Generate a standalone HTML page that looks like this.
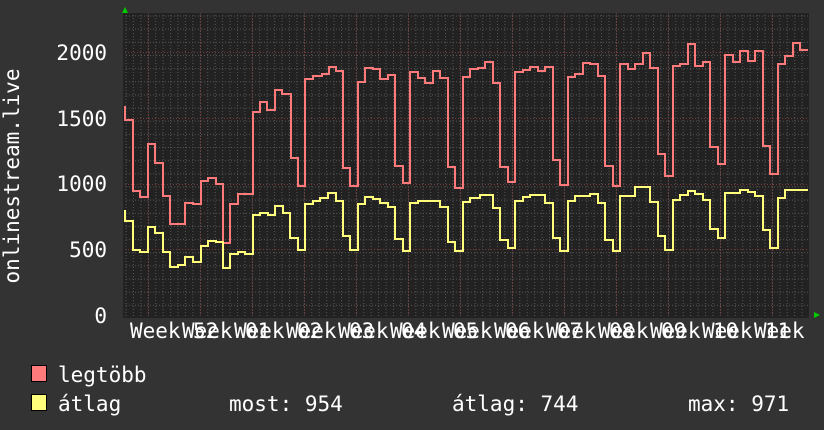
<!DOCTYPE html>
<html><head><meta charset="utf-8"><style>
html,body{margin:0;padding:0;background:#333;}
svg{display:block;font-family:"DejaVu Sans Mono","Liberation Mono",monospace;}
</style></head><body>
<svg width="824" height="430" viewBox="0 0 824 430" xmlns="http://www.w3.org/2000/svg">
<defs>
<pattern id="vg" x="0" y="0" width="7.43" height="430" patternUnits="userSpaceOnUse" patternTransform="translate(125.5 0)">
<line x1="0.5" y1="0" x2="0.5" y2="430" stroke="#555" stroke-width="1" stroke-dasharray="1,2"/>
</pattern>
<pattern id="hg" x="0" y="0" width="824" height="13.15" patternUnits="userSpaceOnUse" patternTransform="translate(0 2.4)">
<line x1="0" y1="0.5" x2="824" y2="0.5" stroke="#555" stroke-width="1" stroke-dasharray="1,2"/>
</pattern>
</defs>
<rect width="824" height="430" fill="#333"/>
<rect x="123" y="13" width="686" height="305" fill="#222"/>
<rect x="125" y="13" width="684" height="303" fill="url(#vg)"/>
<rect x="125" y="13" width="684" height="303" fill="url(#hg)"/>
<g stroke="#7a3a3a" stroke-width="1" stroke-dasharray="1,2">
<line x1="125" y1="52.5" x2="809" y2="52.5"/><line x1="125" y1="118.5" x2="809" y2="118.5"/>
<line x1="125" y1="184.5" x2="809" y2="184.5"/><line x1="125" y1="249.5" x2="809" y2="249.5"/>
<line x1="148.5" y1="13" x2="148.5" y2="316"/><line x1="200.5" y1="13" x2="200.5" y2="316"/>
<line x1="252.5" y1="13" x2="252.5" y2="316"/><line x1="304.5" y1="13" x2="304.5" y2="316"/>
<line x1="356.5" y1="13" x2="356.5" y2="316"/><line x1="408.5" y1="13" x2="408.5" y2="316"/>
<line x1="460.5" y1="13" x2="460.5" y2="316"/><line x1="512.5" y1="13" x2="512.5" y2="316"/>
<line x1="564.5" y1="13" x2="564.5" y2="316"/><line x1="616.5" y1="13" x2="616.5" y2="316"/>
<line x1="668.5" y1="13" x2="668.5" y2="316"/><line x1="720.5" y1="13" x2="720.5" y2="316"/>
<line x1="772.5" y1="13" x2="772.5" y2="316"/>
</g>
<polygon points="122,13 128,13 125,7" fill="#0c0"/>
<polygon points="814,312 814,318 820,315" fill="#0c0"/>
<path fill="none" stroke="#ff7b7b" stroke-width="2" d="M125,106 V120 H133 V191 H140 V197 H148 V144 H155 V163 H163 V196 H170 V224 H185 V203 H193 V204 H201 V181 H208 V178 H216 V184 H223 V243 H230 V204 H238 V194 H253 V112 H260 V102 H267 V110 H275 V90 H282 V94 H291 V158 H298 V186 H305 V79 H313 V76 H322 V74 H329 V67 H336 V71 H343 V168 H350 V186 H358 V82 H365 V68 H373 V69 H380 V79 H388 V75 H395 V166 H403 V183 H410 V72 H418 V78 H425 V83 H433 V71 H440 V78 H448 V167 H455 V188 H463 V77 H470 V69 H478 V68 H485 V62 H493 V83 H500 V167 H508 V182 H515 V72 H523 V70 H530 V67 H538 V71 H545 V67 H553 V160 H560 V185 H568 V77 H575 V74 H583 V63 H590 V64 H598 V76 H605 V166 H613 V186 H620 V64 H628 V69 H635 V64 H643 V53 H650 V68 H658 V154 H665 V176 H673 V66 H680 V64 H688 V44 H695 V66 H703 V62 H710 V147 H718 V164 H725 V55 H733 V62 H740 V51 H748 V61 H755 V51 H763 V146 H770 V174 H778 V64 H785 V56 H793 V43 H800 V50 H808"/>
<path fill="none" stroke="#ffff7b" stroke-width="2" d="M125,210 V221 H133 V250 H140 V252 H148 V227 H155 V233 H163 V252 H170 V267 H178 V265 H185 V257 H193 V262 H201 V246 H208 V241 H216 V242 H223 V268 H230 V254 H238 V252 H245 V254 H253 V215 H260 V213 H268 V215 H275 V206 H283 V213 H290 V238 H298 V250 H305 V204 H313 V201 H320 V198 H328 V193 H336 V201 H343 V236 H350 V250 H358 V204 H365 V197 H373 V199 H380 V203 H388 V207 H395 V239 H403 V251 H410 V203 H418 V201 H440 V207 H448 V242 H455 V251 H463 V202 H470 V198 H480 V195 H493 V208 H500 V240 H508 V248 H515 V201 H523 V197 H530 V195 H545 V203 H553 V238 H560 V251 H568 V201 H575 V196 H590 V194 H598 V203 H605 V240 H613 V251 H620 V196 H635 V187 H650 V202 H658 V236 H665 V250 H673 V200 H680 V195 H688 V191 H695 V194 H703 V200 H710 V229 H718 V238 H725 V193 H740 V190 H748 V192 H755 V196 H763 V230 H770 V248 H778 V198 H785 V190 H808"/>
<g fill="#fff" font-size="21">
<text x="107" y="60" text-anchor="end">2000</text>
<text x="107" y="126" text-anchor="end">1500</text>
<text x="107" y="191" text-anchor="end">1000</text>
<text x="107" y="257" text-anchor="end">500</text>
<text x="107" y="323" text-anchor="end">0</text>
<text transform="translate(19 176) rotate(-90)" text-anchor="middle">onlinestream.live</text>
<text y="338">
<tspan x="130">Week</tspan><tspan x="182">Week</tspan><tspan x="234">Week</tspan><tspan x="286">Week</tspan><tspan x="338">Week</tspan><tspan x="390">Week</tspan><tspan x="442">Week</tspan><tspan x="494">Week</tspan><tspan x="546">Week</tspan><tspan x="598">Week</tspan><tspan x="650">Week</tspan><tspan x="702">Week</tspan><tspan x="754">Week</tspan>
</text>
<text y="338">
<tspan x="193">52</tspan><tspan x="245">01</tspan><tspan x="297">02</tspan><tspan x="349">03</tspan><tspan x="401">04</tspan><tspan x="453">05</tspan><tspan x="505">06</tspan><tspan x="557">07</tspan><tspan x="609">08</tspan><tspan x="661">09</tspan><tspan x="713">10</tspan><tspan x="765">11</tspan>
</text>
<text x="58" y="382">legtöbb</text>
<text x="58" y="411">átlag</text>
<text x="229" y="411">most: 954</text>
<text x="452" y="411">átlag: 744</text>
<text x="688" y="411">max: 971</text>
</g>
<rect x="31.5" y="365.5" width="15" height="16" fill="#ff7b7b" stroke="#000" stroke-width="1"/>
<rect x="31.5" y="394.5" width="15" height="16" fill="#ffff7b" stroke="#000" stroke-width="1"/>
</svg>
</body></html>
